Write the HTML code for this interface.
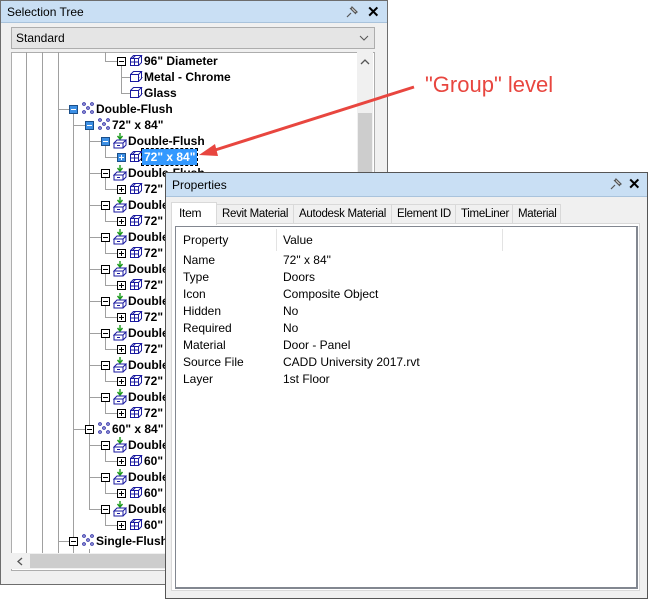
<!DOCTYPE html>
<html><head><meta charset="utf-8">
<style>
*{box-sizing:border-box;margin:0;padding:0}
body{width:650px;height:600px;background:#fff;position:relative;overflow:hidden;font-family:"Liberation Sans",Arial,sans-serif;font-size:12px}
.a{position:absolute}
.win{position:absolute;background:#f0f0f0;border:1px solid #6d6d6d}
.title{position:absolute;left:0;right:0;top:0;height:22px;background:#c9dff4;border-bottom:1px solid #a9c3dc;font-size:12px;padding:4px 0 0 6px;color:#000}
.t{position:absolute;font-weight:bold;font-size:12px;line-height:16px;white-space:nowrap;color:#000}
.vl{position:absolute;width:1px;background:#a0a0a0}
.hl{position:absolute;height:1px;background:#a0a0a0}
.bx{position:absolute;width:9px;height:9px;border:1px solid #000;background:#fff}
.bx.b{background:#3c8fe4;border-color:#1a4f8a}
.bx::before{content:"";position:absolute;left:1px;top:3px;width:5px;height:1px;background:#000}
.bx.p::after{content:"";position:absolute;left:3px;top:1px;width:1px;height:5px;background:#000}
.bx.b::before,.bx.b::after{background:#fff}
.tab{position:absolute;top:204px;height:19px;border:1px solid #d9d9d9;border-bottom:none;background:#f0f0f0;font-size:11.5px;padding:3px 0 0 5px;white-space:nowrap;overflow:hidden;letter-spacing:-0.3px}
.pr{position:absolute;font-size:12px;line-height:17px;color:#000}
</style></head><body>

<div class="win" style="left:0;top:0;width:388px;height:585px">
 <div class="title">Selection Tree</div>
 <svg class="a" style="left:344px;top:4px" width="14" height="14" viewBox="0 0 14 14"><path d="M5 3l6 6M7 2l5 5-2 1-4-4zM6 8l-4 4" stroke="#555" fill="#ddd" stroke-width="1.2"/></svg>
 <div class="a" style="left:366px;top:2px;font-size:15px;font-weight:bold">✕</div>
 <div class="a" style="left:10px;top:26px;width:364px;height:22px;border:1px solid #adadad;background:#e5e5e5;padding:3px 0 0 4px">Standard</div>
 <svg class="a" style="left:358px;top:34px" width="10" height="6"><path d="M1 1l4 4 4-4" stroke="#555" fill="none"/></svg>
 <div class="a" style="left:10px;top:51px;width:364px;height:519px;border:1px solid #adadad;background:#fff"></div>
</div>
<div id="tree" class="a" style="left:0;top:0;width:388px;height:585px;overflow:hidden"></div>
<div class="a" style="left:357px;top:52px;width:16px;height:501px;background:#f0f0f0"></div>
<svg class="a" style="left:360px;top:59px" width="10" height="6"><path d="M1 5l4-4 4 4" stroke="#555" fill="none" stroke-width="1.3"/></svg>
<div class="a" style="left:358px;top:113px;width:14px;height:440px;background:#cdcdcd"></div>
<div class="a" style="left:11px;top:553px;width:362px;height:16px;background:#f0f0f0"></div>
<svg class="a" style="left:17px;top:557px" width="6" height="9"><path d="M5 1L1 4.5 5 8" stroke="#555" fill="none" stroke-width="1.3"/></svg>
<div class="a" style="left:30px;top:554px;width:340px;height:14px;background:#cdcdcd"></div>

<svg class="a" style="left:0;top:0" width="650" height="600"><line x1="414" y1="87" x2="212" y2="151" stroke="#e8463f" stroke-width="3"/><path d="M199 155l16-11 3 12z" fill="#e8463f"/></svg>
<div class="a" style="left:425px;top:72px;font-size:22px;color:#e8463f">"Group" level</div>

<div class="win" style="left:165px;top:172px;width:483px;height:427px;border-color:#555">
 <div class="title" style="height:24px;padding-top:5px">Properties</div>
</div>
<svg class="a" style="left:609px;top:177px" width="14" height="14" viewBox="0 0 14 14"><path d="M5 3l6 6M7 2l5 5-2 1-4-4zM6 8l-4 4" stroke="#555" fill="#ddd" stroke-width="1.2"/></svg>
<div class="a" style="left:628px;top:175px;font-size:15px;font-weight:bold">✕</div>
<div class="a" style="left:171px;top:223px;width:469px;height:368px;border:1px solid #d9d9d9;background:#fff"></div>
<div class="tab" style="left:216px;width:78px">Revit Material</div>
<div class="tab" style="left:293px;width:99px">Autodesk Material</div>
<div class="tab" style="left:391px;width:65px">Element ID</div>
<div class="tab" style="left:455px;width:58px">TimeLiner</div>
<div class="tab" style="left:512px;width:49px">Material</div>
<div class="tab" style="left:171px;top:202px;width:46px;height:23px;background:#fff;padding:3px 0 0 7px;font-size:12px">Item</div>
<div class="a" style="left:175px;top:226px;width:463px;height:363px;border:1px solid #828790;border-width:1px 2px 2px 1px;background:#fff"></div>
<div class="a" style="left:276px;top:229px;width:1px;height:22px;background:#e3e3e3"></div>
<div class="a" style="left:502px;top:229px;width:1px;height:22px;background:#e3e3e3"></div>
<div class="pr" style="left:183px;top:232px">Property</div>
<div class="pr" style="left:283px;top:232px">Value</div>
<div class="pr" style="left:183px;top:252px">Name<br>Type<br>Icon<br>Hidden<br>Required<br>Material<br>Source File<br>Layer</div>
<div class="pr" style="left:283px;top:252px">72" x 84"<br>Doors<br>Composite Object<br>No<br>No<br>Door - Panel<br>CADD University 2017.rvt<br>1st Floor</div>

<script>
var T=document.getElementById('tree'),h='';
function ct(r){return 61+16*r}
function vl(x,y1,y2){h+='<div class="vl" style="left:'+x+'px;top:'+y1+'px;height:'+(y2-y1)+'px"></div>'}
function hl(x1,x2,y){h+='<div class="hl" style="left:'+x1+'px;top:'+y+'px;width:'+(x2-x1)+'px"></div>'}
var mesh='<svg width="14" height="14" viewBox="0 0 14 14"><path d="M1.5 5.5h8v7h-8zM1.5 5.5l3-3h8l-3 3M12.5 2.5v7l-3 3M5.5 5.5v7M1.5 9h8M6.5 2.5l-3 3" stroke="#1a1aa0" fill="#fff" stroke-width="1"/></svg>';
var cube='<svg width="14" height="14" viewBox="0 0 14 14"><path d="M1.5 5.5h8v7h-8zM1.5 5.5l3-3h8l-3 3M12.5 2.5v7l-3 3" stroke="#1a1aa0" fill="#fff" stroke-width="1"/></svg>';
var grp='<svg width="14" height="14" viewBox="0 0 14 14"><g fill="none" stroke="#1a1aa0"><circle cx="3" cy="3" r="1.3"/><circle cx="11" cy="3" r="1.3"/><circle cx="7" cy="7" r="1.3"/><circle cx="3" cy="11" r="1.3"/><circle cx="11" cy="11" r="1.3"/></g></svg>';
var door='<svg width="14" height="16" viewBox="0 0 14 16"><path d="M7 0v5M4.5 3l2.5 3 2.5-3" stroke="#1a9a1a" fill="none" stroke-width="1.4"/><path d="M1 10l3-3h9l-3 3zM1 10v5h9v-5M13 7v5l-3 3M4 12.5h3" stroke="#1a1aa0" fill="#fff"/></svg>';
function node(r,cx,box,icon,text,sel){
 var y=ct(r);
 if(box) h+='<div class="bx '+box+'" style="left:'+(cx-4)+'px;top:'+(y-4)+'px"></div>';
 h+='<div class="a" style="left:'+(cx+8)+'px;top:'+(y-8)+'px">'+icon+'</div>';
 var st='left:'+(cx+23)+'px;top:'+(y-8)+'px';
 if(sel) st+=';background:#3399ff;color:#fff;outline:1px dashed #000;padding:0 2px;margin-left:-2px';
 h+='<div class="t" style="'+st+'">'+text+'</div>';
}
vl(26,52,553);vl(42,52,553);vl(58,52,553);
vl(105,52,ct(0));hl(105,117,ct(0));
vl(121,ct(0)+5,ct(2));hl(121,143,ct(1));hl(121,143,ct(2));
node(0,121,'m',mesh,'96" Diameter');
node(1,121,'',cube,'Metal - Chrome');
node(2,121,'',cube,'Glass');
hl(58,69,ct(3));vl(73,ct(3)+5,553);
node(3,73,'b',grp,'Double-Flush');
hl(73,85,ct(4));vl(89,ct(4)+5,ct(28));
node(4,89,'b',grp,'72" x 84"');
for(var i=0;i<9;i++){var r=5+2*i;
 hl(89,101,ct(r));vl(105,ct(r)+5,ct(r+1));hl(105,117,ct(r+1));
 node(r,105,i==0?'b':'m',door,'Double-Flush');
 node(r+1,121,i==0?'b p':'p',mesh,'72" x 84"',i==0);
}
hl(73,85,ct(23));
node(23,89,'m',grp,'60" x 84"');
for(var i=0;i<3;i++){var r=24+2*i;
 hl(89,101,ct(r));vl(105,ct(r)+5,ct(r+1));hl(105,117,ct(r+1));
 node(r,105,'m',door,'Double-Flush');node(r+1,121,'p',mesh,'60" x 84"');
}
hl(58,69,ct(30));
node(30,73,'m',grp,'Single-Flush');
vl(89,ct(30)+8,553);
T.innerHTML=h;
</script>
</body></html>
